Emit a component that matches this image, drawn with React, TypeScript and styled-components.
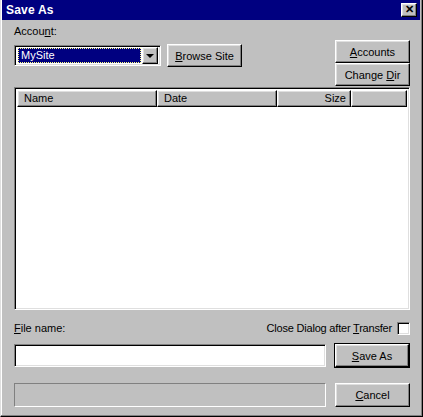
import React from "react";
import styled, { createGlobalStyle, css } from "styled-components";

const Global = createGlobalStyle`
  html, body { margin: 0; padding: 0; background: #c0c0c0; }
  body {
    font-family: "Liberation Sans", Arial, sans-serif;
    font-size: 11px;
    color: #000;
  }
  * { box-sizing: border-box; }
`;

const raised = css`
  background: #c0c0c0;
  border: 1px solid;
  border-color: #fff #000 #000 #fff;
  box-shadow: inset -1px -1px #808080, inset 1px 1px #dfdfdf;
`;

const sunken = css`
  border: 1px solid;
  border-color: #808080 #fff #fff #808080;
  box-shadow: inset 1px 1px #000, inset -1px -1px #dfdfdf;
`;

const Window = styled.div`
  display: flex;
  flex-direction: column;
  width: 423px;
  height: 417px;
  background: #c0c0c0;
  border-left: 1px solid #dfdfdf;
  border-right: 1px solid #000;
  border-bottom: 1px solid #000;
  box-shadow: inset -1px -1px #808080, inset 1px 0 #fff;
  padding: 0 2px 2px 1px;
`;

const TitleBar = styled.div`
  display: flex;
  align-items: center;
  justify-content: space-between;
  height: 20px;
  background: #000080;
  padding: 0 3px 1px 4px;
`;

const TitleText = styled.span`
  color: #fff;
  font-weight: bold;
  font-size: 12px;
  letter-spacing: 0.2px;
`;

const CloseButton = styled.div`
  ${raised};
  width: 16px;
  height: 14px;
  display: flex;
  align-items: center;
  justify-content: center;
  font-size: 11px;
  font-weight: bold;
  line-height: 1;
`;

const Body = styled.div`
  display: flex;
  flex-direction: column;
  flex: 1;
  padding: 0 10px 0 12px;
`;

const TopSection = styled.div`
  display: flex;
  justify-content: space-between;
  height: 67px;
`;

const AccountColumn = styled.div`
  display: flex;
  flex-direction: column;
  padding-top: 4px;
`;

const Label = styled.span<{ $tight?: boolean }>`
  display: block;
  height: 14px;
  line-height: 14px;
  white-space: nowrap;
  letter-spacing: ${(p) => (p.$tight ? "-0.2px" : "normal")};
`;

const AccountRow = styled.div`
  display: flex;
  align-items: center;
  gap: 6px;
  margin-top: 6px;
`;

const Combo = styled.div`
  ${sunken};
  display: flex;
  align-items: center;
  width: 147px;
  height: 21px;
  background: #fff;
  padding: 2px;
`;

const Selected = styled.div`
  flex: 1;
  height: 15px;
  margin: 0 1px;
  background: #000080;
  color: #fff;
  line-height: 13px;
  padding-left: 2px;
  border: 1px dotted #ffff80;
`;

const DropButton = styled.div`
  ${raised};
  width: 16px;
  height: 17px;
  display: flex;
  align-items: center;
  justify-content: center;
`;

const Arrow = styled.span`
  width: 0;
  height: 0;
  border-left: 4px solid transparent;
  border-right: 4px solid transparent;
  border-top: 4px solid #000;
  margin-top: 1px;
`;

const Button = styled.div<{ $w?: number; $h?: number }>`
  ${raised};
  width: ${(p) => p.$w ?? 75}px;
  height: ${(p) => p.$h ?? 23}px;
  display: flex;
  align-items: center;
  justify-content: center;
  white-space: nowrap;
`;

const DefaultButton = styled.div`
  border: 1px solid #000;
  width: 76px;
  height: 25px;
  display: flex;
`;

const DefaultInner = styled.div`
  ${raised};
  flex: 1;
  display: flex;
  align-items: center;
  justify-content: center;
`;

const Caption = styled.span`
  white-space: pre;
`;

const ButtonColumn = styled.div`
  display: flex;
  flex-direction: column;
  padding-top: 20px;
`;

const FileList = styled.div`
  ${sunken};
  height: 223px;
  background: #fff;
  padding: 2px;
`;

const Header = styled.div`
  display: grid;
  grid-template-columns: 140px 120px 74px 1fr;
  height: 17px;
`;

const HeaderCell = styled.div<{ $right?: boolean }>`
  ${raised};
  line-height: 14px;
  padding: 0 ${(p) => (p.$right ? "4px" : "0")} 0 ${(p) => (p.$right ? "0" : "6px")};
  text-align: ${(p) => (p.$right ? "right" : "left")};
`;

const NameRow = styled.div`
  display: flex;
  justify-content: space-between;
  align-items: center;
  height: 16px;
  margin-top: 10px;
`;

const CheckWrap = styled.div`
  display: flex;
  align-items: center;
  gap: 5px;
`;

const CheckBox = styled.div`
  ${sunken};
  width: 13px;
  height: 13px;
  background: #fff;
`;

const ActionRow = styled.div<{ $top: number }>`
  display: flex;
  align-items: center;
  justify-content: space-between;
  margin-top: ${(p) => p.$top}px;
`;

const TextInput = styled.div`
  ${sunken};
  width: 312px;
  height: 23px;
  background: #fff;
`;

const Status = styled.div`
  width: 312px;
  height: 24px;
  border: 1px solid;
  border-color: #808080 #fff #fff #808080;
`;

const U = styled.span`
  text-decoration: underline;
  text-underline-offset: 1px;
`;

export default function App() {
  return (
    <>
      <Global />
      <Window>
        <TitleBar>
          <TitleText>Save As</TitleText>
          <CloseButton>✕</CloseButton>
        </TitleBar>
        <Body>
          <TopSection>
            <AccountColumn>
              <Label>
                Accou<U>n</U>t:
              </Label>
              <AccountRow>
                <Combo>
                  <Selected>MySite</Selected>
                  <DropButton>
                    <Arrow />
                  </DropButton>
                </Combo>
                <Button>
                  <Caption>
                    <U>B</U>rowse Site
                  </Caption>
                </Button>
              </AccountRow>
            </AccountColumn>
            <ButtonColumn>
              <Button>
                <Caption>
                  <U>A</U>ccounts
                </Caption>
              </Button>
              <Button>
                <Caption>
                  Change <U>D</U>ir
                </Caption>
              </Button>
            </ButtonColumn>
          </TopSection>
          <FileList>
            <Header>
              <HeaderCell>Name</HeaderCell>
              <HeaderCell>Date</HeaderCell>
              <HeaderCell $right>Size</HeaderCell>
              <HeaderCell />
            </Header>
          </FileList>
          <NameRow>
            <Label>
              <U>F</U>ile name:
            </Label>
            <CheckWrap>
              <Label $tight>
                Close Dialog after <U>T</U>ransfer
              </Label>
              <CheckBox />
            </CheckWrap>
          </NameRow>
          <ActionRow $top={7}>
            <TextInput />
            <DefaultButton>
              <DefaultInner>
                <Caption>
                  <U>S</U>ave As
                </Caption>
              </DefaultInner>
            </DefaultButton>
          </ActionRow>
          <ActionRow $top={15}>
            <Status />
            <Button $h={24}>
              <Caption>
                <U>C</U>ancel
              </Caption>
            </Button>
          </ActionRow>
        </Body>
      </Window>
    </>
  );
}
